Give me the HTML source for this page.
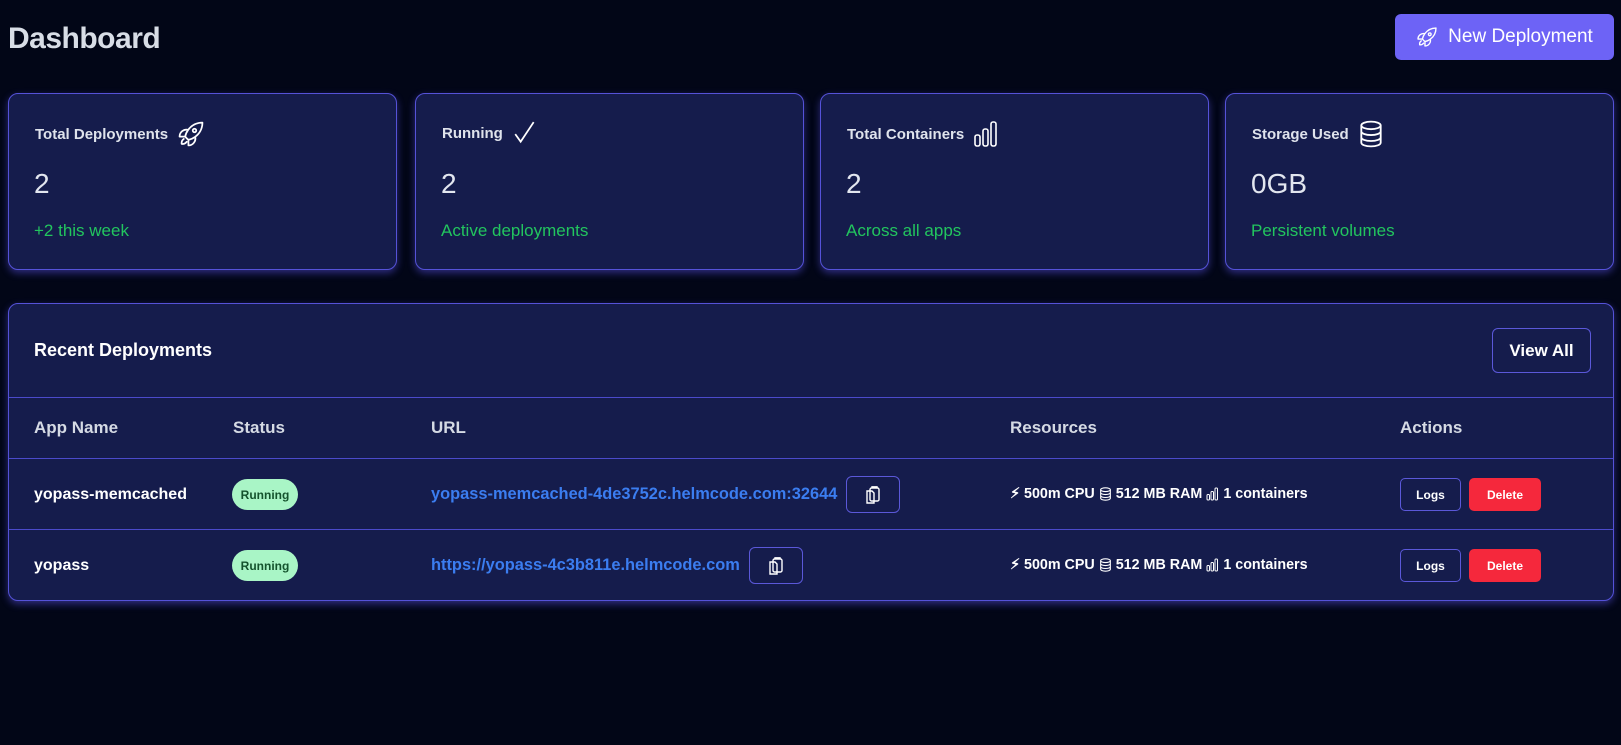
<!DOCTYPE html>
<html><head><meta charset="utf-8"><style>
*{box-sizing:border-box;margin:0;padding:0}
body{width:1621px;height:745px;background:#020617;font-family:"Liberation Sans",sans-serif;color:#e2e8f0;position:relative;overflow:hidden}
.abs{position:absolute}
h1{position:absolute;left:8px;top:22px;font-size:30px;font-weight:bold;color:#d8dde6;letter-spacing:-0.5px}
.btn{position:absolute;left:1395px;top:14px;width:219px;height:46px;background:#6d63f6;border-radius:6px;color:#fff;font-size:19px;display:flex;align-items:center;justify-content:center;gap:10px}
.card{position:absolute;top:93px;width:389px;height:177px;background:#151c4c;border:1px solid #5552d8;border-radius:10px;box-shadow:0 3px 8px rgba(99,91,255,.45)}
.card .t{position:absolute;left:26px;top:26px;font-size:15px;font-weight:bold;color:#dfe3ec;display:flex;align-items:center;gap:9px}
.card .n{position:absolute;left:25px;top:74px;font-size:28px;color:#e2e6ef}
.card .s{position:absolute;left:25px;top:127px;font-size:17px;color:#22c55e}
.panel{position:absolute;left:8px;top:303px;width:1606px;height:298px;background:#151c4c;border:1px solid #5552d8;border-radius:10px;box-shadow:0 3px 8px rgba(99,91,255,.45)}
.hl{position:absolute;left:0;width:100%;height:1px;background:#4b4acb}
.th{position:absolute;top:418px;font-size:17px;font-weight:bold;color:#d5dae4}
.td{position:absolute;font-size:16px;font-weight:bold;color:#fff}
.badge{position:absolute;left:232px;width:66px;height:31px;border-radius:16px;background:#a9f5c6;color:#14532d;font-size:12px;font-weight:bold;display:flex;align-items:center;justify-content:center}
.urlrow{position:absolute;left:431px;display:flex;align-items:center;gap:9px}
.url{font-size:16.4px;font-weight:bold;color:#3b7df0}
.copy{width:54px;height:37px;border:1px solid #5b58d9;border-radius:6px;display:flex;align-items:center;justify-content:center}
.res{position:absolute;left:1010px;font-size:14.3px;font-weight:bold;color:#fff;display:flex;align-items:center;gap:4px}
.logs{position:absolute;left:1400px;width:61px;height:33px;border:1px solid #5b58d9;border-radius:5px;font-size:12px;font-weight:bold;color:#fff;display:flex;align-items:center;justify-content:center}
.del{position:absolute;left:1469px;width:72px;height:33px;background:#f5283c;border-radius:5px;font-size:12px;font-weight:bold;color:#fff;display:flex;align-items:center;justify-content:center}
</style></head><body>
<h1>Dashboard</h1>
<div class="btn"><svg width="22" height="22" viewBox="0 0 24 24" fill="none" stroke="#fff" stroke-width="1.5" stroke-linecap="round" stroke-linejoin="round"><path d="M15.6 14.4a6 6 0 0 1-5.8 7.4v-4.8m5.8-2.6A15 15 0 0 0 21.8 2.2 15 15 0 0 0 9.6 8.4m6 6a15 15 0 0 1-5.8 2.6m-.2-8.6a6 6 0 0 0-7.4 5.8h4.8m2.6-5.8A15 15 0 0 0 7 14.2m2.8 2.8a15 15 0 0 1-2.8-2.8M5.8 16.2a4.5 4.5 0 0 0-1.8 4.3 4.5 4.5 0 0 0 4.3-1.8"/><circle cx="15" cy="9" r="1.5"/></svg>New Deployment</div>

<div class="card" style="left:8px"><div class="t">Total Deployments <svg width="28" height="28" viewBox="0 0 24 24" fill="none" stroke="#fff" stroke-width="1.5" stroke-linecap="round" stroke-linejoin="round"><path d="M15.6 14.4a6 6 0 0 1-5.8 7.4v-4.8m5.8-2.6A15 15 0 0 0 21.8 2.2 15 15 0 0 0 9.6 8.4m6 6a15 15 0 0 1-5.8 2.6m-.2-8.6a6 6 0 0 0-7.4 5.8h4.8m2.6-5.8A15 15 0 0 0 7 14.2m2.8 2.8a15 15 0 0 1-2.8-2.8M5.8 16.2a4.5 4.5 0 0 0-1.8 4.3 4.5 4.5 0 0 0 4.3-1.8"/><circle cx="15" cy="9" r="1.5"/></svg></div><div class="n">2</div><div class="s">+2 this week</div></div>
<div class="card" style="left:415px"><div class="t">Running <svg width="26" height="26" viewBox="0 0 24 24" fill="none" stroke="#fff" stroke-width="1.6"><path d="M3 13l5 7L20 2"/></svg></div><div class="n">2</div><div class="s">Active deployments</div></div>
<div class="card" style="left:820px"><div class="t">Total Containers <svg width="26" height="28" viewBox="0 0 26 28" fill="none" stroke="#fff" stroke-width="1.6"><rect x="2" y="15" width="5" height="11" rx="2"/><rect x="10" y="9" width="5" height="17" rx="2"/><rect x="18" y="2" width="5" height="24" rx="2"/></svg></div><div class="n">2</div><div class="s">Across all apps</div></div>
<div class="card" style="left:1225px"><div class="t">Storage Used <svg width="26" height="28" viewBox="0 0 24 26" fill="none" stroke="#fff" stroke-width="1.7"><ellipse cx="12" cy="5" rx="9" ry="3.5"/><path d="M3 5v16c0 2 4 3.5 9 3.5s9-1.5 9-3.5V5M3 10.5c0 2 4 3.5 9 3.5s9-1.5 9-3.5M3 16c0 2 4 3.5 9 3.5s9-1.5 9-3.5"/></svg></div><div class="n">0GB</div><div class="s">Persistent volumes</div></div>

<div class="panel">
<div class="abs" style="left:25px;top:36px;font-size:18px;font-weight:bold;color:#fff">Recent Deployments</div>
<div class="abs" style="left:1483px;top:24px;width:99px;height:45px;border:1px solid #5b58d9;border-radius:6px;display:flex;align-items:center;justify-content:center;font-size:17px;font-weight:bold;color:#fff">View All</div>
<div class="hl" style="top:93px"></div>
<div class="hl" style="top:154px"></div>
<div class="hl" style="top:225px"></div>
</div>
<div class="th" style="left:34px">App Name</div>
<div class="th" style="left:233px">Status</div>
<div class="th" style="left:431px">URL</div>
<div class="th" style="left:1010px">Resources</div>
<div class="th" style="left:1400px">Actions</div>

<div class="td" style="left:34px;top:486px">yopass-memcached</div>
<div class="badge" style="top:479px">Running</div>
<div class="urlrow" style="top:476px"><span class="url">yopass-memcached-4de3752c.helmcode.com:32644</span><div class="copy"><svg width="18" height="20" viewBox="0 0 18 20" fill="none" stroke="#fff" stroke-width="1.4"><rect x="6" y="3" width="9" height="13" rx="1.5"/><path d="M8 3V1.8h5V3"/><path d="M3 6h5l2 2v10H3z"/></svg></div></div>
<div class="res" style="top:486px">⚡︎ 500m CPU <svg width="13" height="14" viewBox="0 0 24 26" fill="none" stroke="#fff" stroke-width="2"><ellipse cx="12" cy="5" rx="9" ry="3.5"/><path d="M3 5v16c0 2 4 3.5 9 3.5s9-1.5 9-3.5V5M3 10.5c0 2 4 3.5 9 3.5s9-1.5 9-3.5M3 16c0 2 4 3.5 9 3.5s9-1.5 9-3.5"/></svg> 512 MB RAM <svg width="13" height="14" viewBox="0 0 26 28" fill="none" stroke="#fff" stroke-width="2"><rect x="2" y="15" width="5" height="11" rx="2"/><rect x="10" y="9" width="5" height="17" rx="2"/><rect x="18" y="2" width="5" height="24" rx="2"/></svg> 1 containers</div>
<div class="logs" style="top:478px">Logs</div>
<div class="del" style="top:478px">Delete</div>

<div class="td" style="left:34px;top:557px">yopass</div>
<div class="badge" style="top:550px">Running</div>
<div class="urlrow" style="top:547px"><span class="url">https://yopass-4c3b811e.helmcode.com</span><div class="copy"><svg width="18" height="20" viewBox="0 0 18 20" fill="none" stroke="#fff" stroke-width="1.4"><rect x="6" y="3" width="9" height="13" rx="1.5"/><path d="M8 3V1.8h5V3"/><path d="M3 6h5l2 2v10H3z"/></svg></div></div>
<div class="res" style="top:557px">⚡︎ 500m CPU <svg width="13" height="14" viewBox="0 0 24 26" fill="none" stroke="#fff" stroke-width="2"><ellipse cx="12" cy="5" rx="9" ry="3.5"/><path d="M3 5v16c0 2 4 3.5 9 3.5s9-1.5 9-3.5V5M3 10.5c0 2 4 3.5 9 3.5s9-1.5 9-3.5M3 16c0 2 4 3.5 9 3.5s9-1.5 9-3.5"/></svg> 512 MB RAM <svg width="13" height="14" viewBox="0 0 26 28" fill="none" stroke="#fff" stroke-width="2"><rect x="2" y="15" width="5" height="11" rx="2"/><rect x="10" y="9" width="5" height="17" rx="2"/><rect x="18" y="2" width="5" height="24" rx="2"/></svg> 1 containers</div>
<div class="logs" style="top:549px">Logs</div>
<div class="del" style="top:549px">Delete</div>
</body></html>
